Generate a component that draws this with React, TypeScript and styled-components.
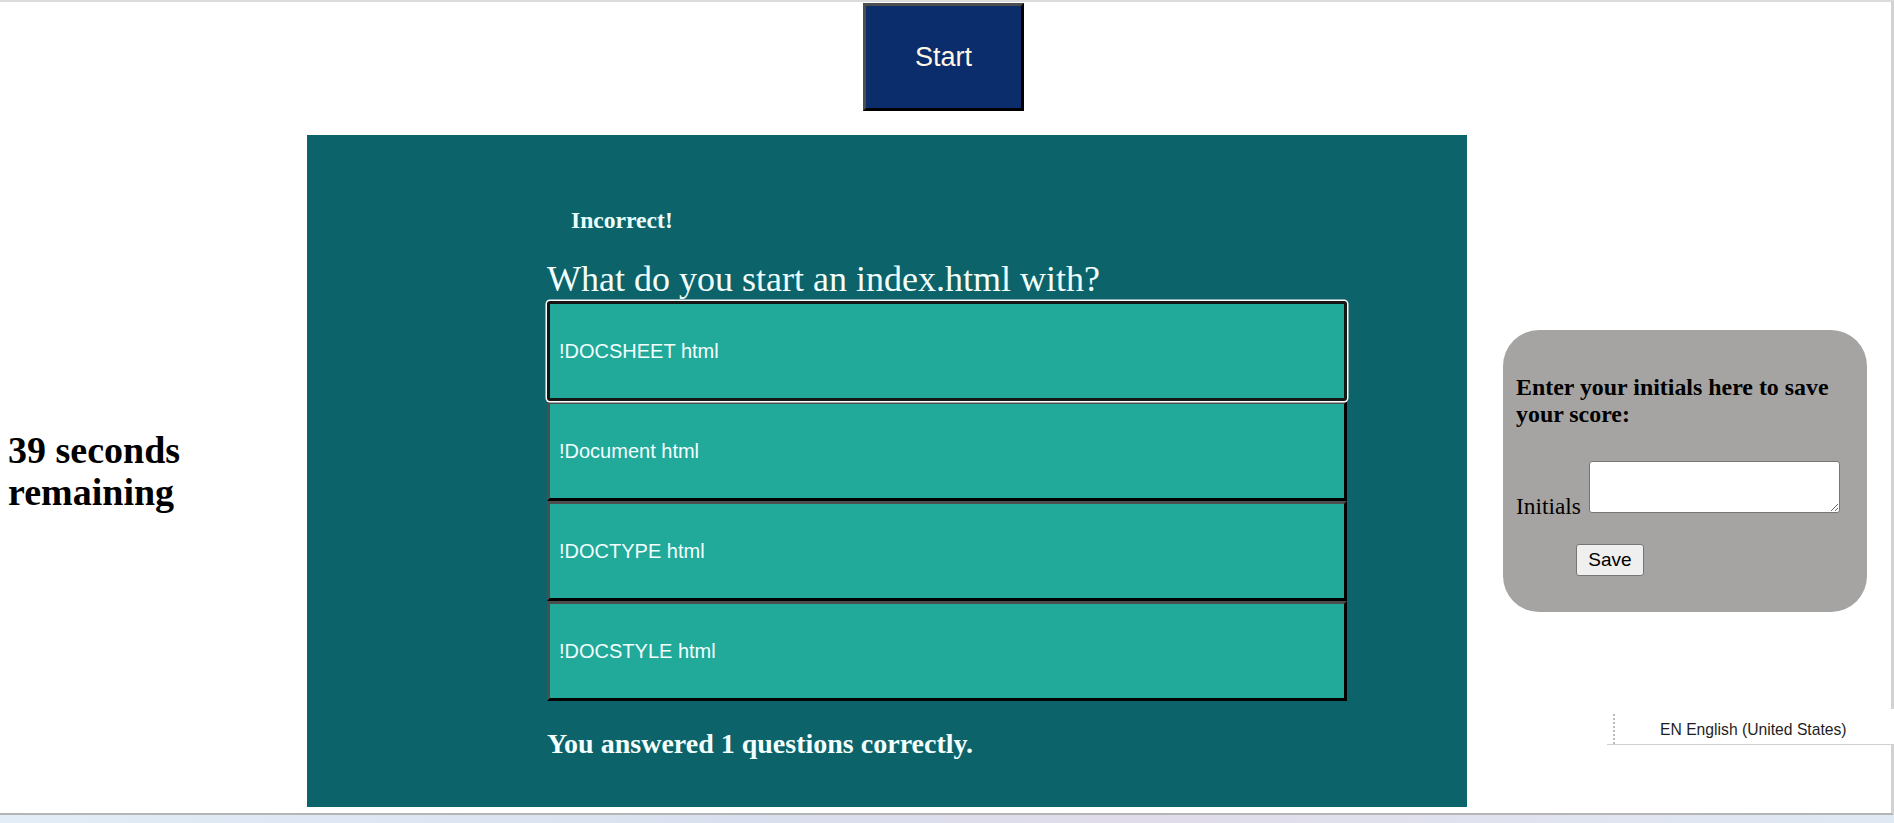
import React from "react";
import styled, { createGlobalStyle } from "styled-components";

const Global = createGlobalStyle`
  html, body {
    margin: 0;
    padding: 0;
    background: #ffffff;
    overflow: hidden;
  }
  body {
    font-family: "Liberation Serif", "Times New Roman", serif;
  }
`;

const Frame = styled.div`
  position: relative;
  box-sizing: border-box;
  height: 815px;
  border-top: 2px solid #dcdcdc;
  border-right: 3px solid #d2d2d2;
  border-bottom: 2px solid #b5b5b5;
  padding-top: 1px;
  padding-right: 4px;
  display: flex;
  flex-direction: column;
`;

const Taskbar = styled.div`
  height: 8px;
  background: linear-gradient(90deg, #e2edf7 0%, #d9dfee 40%, #e1dcea 60%, #dfe9f4 100%);
`;

const StartRow = styled.div`
  display: flex;
  justify-content: center;
`;

const StartButton = styled.button`
  box-sizing: border-box;
  width: 161px;
  height: 108px;
  background: #0c2d6b;
  color: #fff8e4;
  font-family: "Liberation Sans", Arial, sans-serif;
  font-size: 27px;
  border: 3px solid;
  border-color: #4d4d4d #000 #000 #4d4d4d;
  padding: 0;
  cursor: pointer;
`;

const MainRow = styled.div`
  margin-top: 24px;
  display: flex;
  align-items: center;
`;

const TimerCol = styled.div`
  box-sizing: border-box;
  width: 307px;
  padding-left: 8px;
`;

const Timer = styled.h1`
  margin: 0;
  font-size: 38px;
  line-height: 42px;
  font-weight: bold;
  color: #000;
`;

const Panel = styled.section`
  box-sizing: border-box;
  width: 1160px;
  height: 672px;
  background: #0c6369;
  padding: 72px 120px 0 240px;
  display: flex;
  flex-direction: column;
`;

const Feedback = styled.h3`
  margin: 0;
  padding-left: 24px;
  font-size: 23.6px;
  line-height: 27px;
  font-weight: bold;
  color: #eaffff;
`;

const Question = styled.h2`
  margin: 25px 0 0 0;
  font-size: 36px;
  line-height: 40px;
  font-weight: normal;
  color: #f2ffff;
`;

const Answers = styled.div`
  margin-top: 2px;
  display: flex;
  flex-direction: column;
`;

const AnswerButton = styled.button<{ $focused?: boolean }>`
  box-sizing: border-box;
  width: 800px;
  height: 100px;
  background: #21a99a;
  color: #f4ffff;
  font-family: "Liberation Sans", Arial, sans-serif;
  font-size: 20px;
  text-align: left;
  padding: 0 9px;
  border: 3px solid;
  border-color: ${(p) => (p.$focused ? "#161616" : "#4d4d4d #000 #000 #4d4d4d")};
  border-radius: ${(p) => (p.$focused ? "3px" : "0")};
  box-shadow: ${(p) => (p.$focused ? "0 0 0 1.5px #ffffff" : "none")};
  position: relative;
  z-index: ${(p) => (p.$focused ? 1 : 0)};
  cursor: pointer;
`;

const Result = styled.h3`
  margin: 27px 0 0 0;
  font-size: 28px;
  line-height: 32px;
  font-weight: bold;
  color: #f4ffff;
`;

const Card = styled.aside`
  box-sizing: border-box;
  margin-left: 36px;
  width: 364px;
  height: 282px;
  background: #a6a4a2;
  border-radius: 36px;
  padding: 44px 20px 0 13px;
  display: flex;
  flex-direction: column;
  align-items: flex-start;
`;

const CardTitle = styled.h3`
  margin: 0;
  font-size: 23.9px;
  line-height: 27px;
  font-weight: bold;
  color: #000;
`;

const InitialsRow = styled.div`
  margin-top: 33px;
  display: flex;
  align-items: flex-end;
  gap: 8px;
`;

const InitialsLabel = styled.label`
  font-size: 23.4px;
  line-height: 14px;
  color: #000;
`;

const InitialsInput = styled.textarea`
  box-sizing: border-box;
  width: 251px;
  height: 52px;
  border: 1px solid #767676;
  border-radius: 3px;
  background: #fff;
  margin: 0;
  display: block;
`;

const SaveButton = styled.button`
  box-sizing: border-box;
  margin: 31px 0 0 60px;
  width: 68px;
  height: 32px;
  background: #efefef;
  border: 1px solid #767676;
  border-radius: 3px;
  font-family: "Liberation Sans", Arial, sans-serif;
  font-size: 19px;
  color: #000;
  padding: 0;
`;

const LangBar = styled.div`
  position: absolute;
  right: -3px;
  bottom: 68px;
  width: 287px;
  height: 36px;
  box-sizing: border-box;
  background: #fff;
  border-bottom: 1px solid #d0d0d0;
  display: flex;
  align-items: flex-end;
  padding: 0 0 4px 6px;
`;

const Gripper = styled.div`
  width: 2px;
  height: 30px;
  margin-bottom: -4px;
  background: repeating-linear-gradient(to bottom, #b8b8b8 0 2px, transparent 2px 4px);
`;

const LangText = styled.span`
  margin-left: 45px;
  font-family: "Liberation Sans", Arial, sans-serif;
  font-size: 15.7px;
  line-height: 20px;
  color: #1e1e1e;
`;

const answers = ["!DOCSHEET html", "!Document html", "!DOCTYPE html", "!DOCSTYLE html"];

export default function App() {
  return (
    <>
      <Global />
      <Frame>
        <StartRow>
          <StartButton>Start</StartButton>
        </StartRow>
        <MainRow>
          <TimerCol>
            <Timer>
              39 seconds
              <br />
              remaining
            </Timer>
          </TimerCol>
          <Panel>
            <Feedback>Incorrect!</Feedback>
            <Question>What do you start an index.html with?</Question>
            <Answers>
              {answers.map((a, i) => (
                <AnswerButton key={a} $focused={i === 0}>
                  {a}
                </AnswerButton>
              ))}
            </Answers>
            <Result>You answered 1 questions correctly.</Result>
          </Panel>
          <Card>
            <CardTitle>Enter your initials here to save your score:</CardTitle>
            <InitialsRow>
              <InitialsLabel htmlFor="initials">Initials</InitialsLabel>
              <InitialsInput id="initials" />
            </InitialsRow>
            <SaveButton>Save</SaveButton>
          </Card>
        </MainRow>
        <LangBar>
          <Gripper />
          <LangText>EN English (United States)</LangText>
        </LangBar>
      </Frame>
      <Taskbar />
    </>
  );
}
